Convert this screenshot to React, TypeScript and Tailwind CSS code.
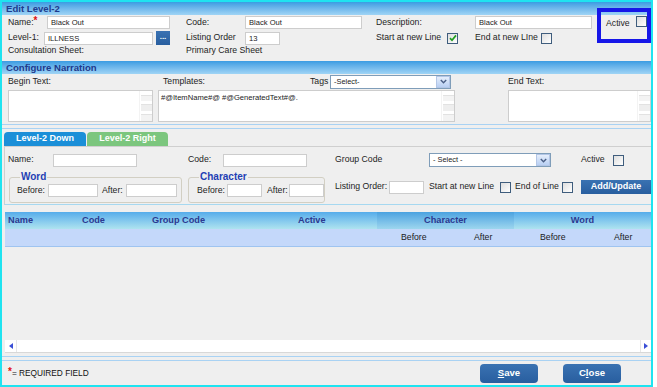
import React from 'react';

type P = { className?: string; children?: React.ReactNode };

function Field({ className = '', children }: P) {
  return (
    <div className={`h-[13px] shrink-0 bg-white border border-[#cdcdcd] pl-[3px] text-[7.6px] leading-[11px] text-[#1a1a1a] whitespace-nowrap overflow-hidden ${className}`}>
      {children}
    </div>
  );
}

function Check({ on = false }: { on?: boolean }) {
  return (
    <span className="inline-flex w-[11px] h-[11px] shrink-0 border border-[#3f5d7d] bg-linear-to-br from-[#dedede] to-white items-center justify-center">
      {on && (
        <svg width="8" height="8" viewBox="0 0 8 8">
          <path d="M1 4.2 L3 6.3 L7 1.4" fill="none" stroke="#1f9e1f" strokeWidth="1.7" />
        </svg>
      )}
    </span>
  );
}

function Select({ className = '', text }: { className?: string; text: string }) {
  return (
    <div className={`h-[14px] shrink-0 bg-white border border-[#7f9db9] flex items-center ${className}`}>
      <span className="flex-1 pl-[3px] text-[7.4px] leading-[12px] text-[#222]">{text}</span>
      <span className="w-[14px] h-[12px] border border-[#b3c6e6] bg-linear-to-b from-[#e6eefb] to-[#b8cff3] flex items-center justify-center">
        <svg width="7" height="5" viewBox="0 0 7 5">
          <path d="M0.8 0.9 L3.5 3.8 L6.2 0.9" fill="none" stroke="#4a5f86" strokeWidth="1.4" />
        </svg>
      </span>
    </div>
  );
}

function Area({ className = '', children }: P) {
  return (
    <div className={`h-[32px] shrink-0 bg-white border border-[#cdcdcd] flex ${className}`}>
      <div className="flex-1 pl-[2px] pt-[2px] text-[7.6px] leading-[10px] text-[#1a1a1a] whitespace-nowrap overflow-hidden">
        {children}
      </div>
      <div className="w-[13px] flex flex-col gap-[3px] pt-[4px] pl-[1px] border-l border-[#f3f3f3]">
        <div className="h-[6px] bg-[#f3f3f3] border-t border-[#e2e2e2]" />
        <div className="h-[7px] bg-[#eeeeee] border-t border-[#e2e2e2]" />
        <div className="h-[7px] bg-[#f3f3f3] border-t border-[#e2e2e2]" />
      </div>
    </div>
  );
}

function Bar({ children }: P) {
  return (
    <div className="h-[13px] shrink-0 bg-linear-to-b from-[#3a9ce2] to-[#9fd4f5] pl-[4px] text-[9.6px] font-bold leading-[13px] text-[#1e3a8c]">
      {children}
    </div>
  );
}

function Fieldset({ legend, className = '', children }: P & { legend: string }) {
  return (
    <div className={`relative h-[26px] shrink-0 border border-[#d2cfc3] rounded-[3px] ${className}`}>
      <span className="absolute -top-[6px] left-[10px] px-[1px] bg-[#efefef] text-[10px] font-bold leading-[10px] text-[#1f3fb4]">
        {legend}
      </span>
      <div className="flex items-center pt-[6px]">{children}</div>
    </div>
  );
}

function Button({ className = '', children }: P) {
  return (
    <div className={`flex items-center justify-center bg-linear-to-b from-[#3a72b2] to-[#285e9f] text-white font-bold ${className}`}>
      {children}
    </div>
  );
}

function Star() {
  return (
    <span className="inline-block align-top text-[#e01010] font-bold text-[10px] leading-[7px]">*</span>
  );
}

export default function App() {
  return (
    <div className="w-[657px] h-[387px] bg-white font-['Liberation_Sans',Arial,sans-serif] text-[8.7px] text-[#1e1e1e]">
      <div className="relative w-[653px] h-[387px] border-2 border-[#1fe3f0] bg-[#efefef] flex flex-col">
        <Bar>Edit Level-2</Bar>

        {/* Row 1 */}
        <div className="mt-[1px] h-[13px] pl-[6px] flex items-center">
          <span className="w-[39px] leading-[11px]">
            Name:<Star />
          </span>
          <Field className="w-[123px]">Black Out</Field>
          <span className="ml-[16px] w-[59px]">Code:</span>
          <Field className="w-[117px]">Black Out</Field>
          <span className="ml-[14px] w-[99px]">Description:</span>
          <Field className="w-[117px]">Black Out</Field>
          <span className="ml-[14px] w-[30px] mt-[3px]">Active</span>
          <span className="mt-[2px]"><Check /></span>
        </div>

        {/* Row 2 */}
        <div className="mt-[2px] h-[14px] pl-[6px] flex items-center">
          <span className="w-[36px]">Level-1:</span>
          <Field className="w-[109px]">ILLNESS</Field>
          <Button className="ml-[3px] w-[14px] h-[14px] text-[8px] leading-[8px] pb-[2px]">...</Button>
          <span className="ml-[16px] w-[59px]">Listing Order</span>
          <Field className="w-[35px]">13</Field>
          <span className="ml-[96px] w-[71px]">Start at new Line</span>
          <Check on />
          <span className="ml-[17px] w-[66px]">End at new LIne</span>
          <Check />
        </div>

        {/* Row 3 */}
        <div className="h-[12px] pl-[6px] flex items-center">
          <span className="w-[178px]">Consultation Sheet:</span>
          <span>Primary Care Sheet</span>
        </div>

        <div className="mt-[4px]">
          <Bar>Configure Narration</Bar>
        </div>

        <div className="h-[15px] pl-[6px] flex items-center">
          <span className="w-[155px]">Begin Text:</span>
          <span className="w-[147px]">Templates:</span>
          <span className="w-[20px]">Tags</span>
          <Select className="w-[121px]" text="-Select-" />
          <span className="ml-[57px]">End Text:</span>
        </div>

        <div className="mt-[1px] pl-[6px] flex">
          <Area className="w-[145px]" />
          <Area className="ml-[5px] w-[297px]">#@ItemName#@ #@GeneratedText#@.</Area>
          <Area className="ml-[53px] w-[143px]" />
        </div>

        <div className="mt-[2px] h-[1px] bg-[#a9d2f3]" />
        <div className="mt-[3px] h-[1px] bg-[#a9d2f3]" />

        {/* Tabs */}
        <div className="mt-[3px] pl-[2px] flex h-[14px]">
          <div className="w-[82px] rounded-t-[4px] bg-[#1b8fd8] text-white font-bold text-[9px] flex items-center justify-center">
            Level-2 Down
          </div>
          <div className="ml-[1px] w-[81px] rounded-t-[4px] bg-[#7cc67e] text-white font-bold text-[9px] flex items-center justify-center">
            Level-2 Right
          </div>
        </div>

        <div className="ml-[2px] border-l border-t border-[#cfcfcf] border-b-[#a6d8f0] border-b pb-[1px]">
          <div className="mt-[7px] h-[12px] pl-[3px] flex items-center">
            <span className="w-[45px]">Name:</span>
            <Field className="w-[84px]" />
            <span className="ml-[51px] w-[35px]">Code:</span>
            <Field className="w-[84px]" />
            <span className="ml-[28px] w-[94px]">Group Code</span>
            <Select className="w-[122px]" text="- Select -" />
            <span className="ml-[30px] w-[32px]">Active</span>
            <Check />
          </div>

          <div className="mt-[11px] pl-[4px] flex items-start">
            <Fieldset legend="Word" className="w-[173px]">
              <span className="ml-[7px] w-[31px]">Before:</span>
              <Field className="w-[50px]" />
              <span className="ml-[4px] w-[24px]">After:</span>
              <Field className="w-[51px]" />
            </Fieldset>
            <Fieldset legend="Character" className="ml-[6px] w-[137px]">
              <span className="ml-[8px] w-[30px]">Before:</span>
              <Field className="w-[35px]" />
              <span className="ml-[5px] w-[22px]">After:</span>
              <Field className="w-[35px]" />
            </Fieldset>
            <div className="ml-[10px] mt-[3px] flex items-center">
              <span className="w-[54px]">Listing Order:</span>
              <Field className="w-[35px]" />
              <span className="ml-[5px] w-[71px]">Start at new Line</span>
              <Check />
              <span className="ml-[4px] w-[47px]">End of Line</span>
              <Check />
              <Button className="ml-[8px] w-[70px] h-[14px] text-[9px]">Add/Update</Button>
            </div>
          </div>
        </div>

        {/* Grid */}
        <div className="mt-[7px] ml-[3px] w-[646px] border-b border-[#9fc4f0]">
          <div className="h-[17px] flex items-center bg-linear-to-b from-[#55acea] to-[#aee3ef] font-bold text-[9.2px] text-[#2b3990]">
            <span className="pl-[3px] w-[77px]">Name</span>
            <span className="w-[70px]">Code</span>
            <span className="w-[146px]">Group Code</span>
            <span className="w-[79px]">Active</span>
            <span className="w-[137px] h-full flex items-center justify-center bg-linear-to-b from-[#4aa2e0] to-[#9dd6ee]">
              Character
            </span>
            <span className="flex-1 text-center">Word</span>
          </div>
          <div className="h-[17px] flex items-center bg-[#c4d8fa] text-[8.7px] text-[#1a1a1a]">
            <span className="ml-[396px] w-[73px]">Before</span>
            <span className="w-[66px]">After</span>
            <span className="w-[74px]">Before</span>
            <span>After</span>
          </div>
        </div>

        <div className="flex-1" />

        {/* Scrollbar */}
        <div className="ml-[3px] w-[646px] h-[13px] bg-white border-b border-[#d8d8d8] flex items-center">
          <div className="w-[12px] h-full flex items-center justify-center border-r border-[#e6e6e6]">
            <svg width="4" height="6" viewBox="0 0 4 6">
              <path d="M4 0 L0 3 L4 6 Z" fill="#3b4fd6" />
            </svg>
          </div>
          <div className="flex-1" />
          <div className="w-[11px] h-full flex items-center justify-center border-l border-[#e6e6e6]">
            <svg width="4" height="6" viewBox="0 0 4 6">
              <path d="M0 0 L4 3 L0 6 Z" fill="#3b4fd6" />
            </svg>
          </div>
        </div>

        <div className="mt-[3px] h-[1px] bg-[#a9d2f3]" />
        <div className="mt-[3px] h-[1px] bg-[#a9d2f3]" />

        {/* Footer */}
        <div className="h-[24px] pl-[6px] flex items-center">
          <span className="w-[472px] text-[8.3px] leading-[10px] text-[#111]">
            <Star />= REQUIRED FIELD
          </span>
          <Button className="w-[58px] h-[19px] rounded-[4px] text-[9.6px]">
            <span className="underline">S</span>ave
          </Button>
          <Button className="ml-[25px] w-[58px] h-[19px] rounded-[4px] text-[9.6px]">
            C<span className="underline">l</span>ose
          </Button>
        </div>

        {/* highlight box */}
        <div className="absolute left-[595px] top-[6px] w-[54px] h-[35px] border-4 border-[#1616e8]" />
      </div>
    </div>
  );
}
